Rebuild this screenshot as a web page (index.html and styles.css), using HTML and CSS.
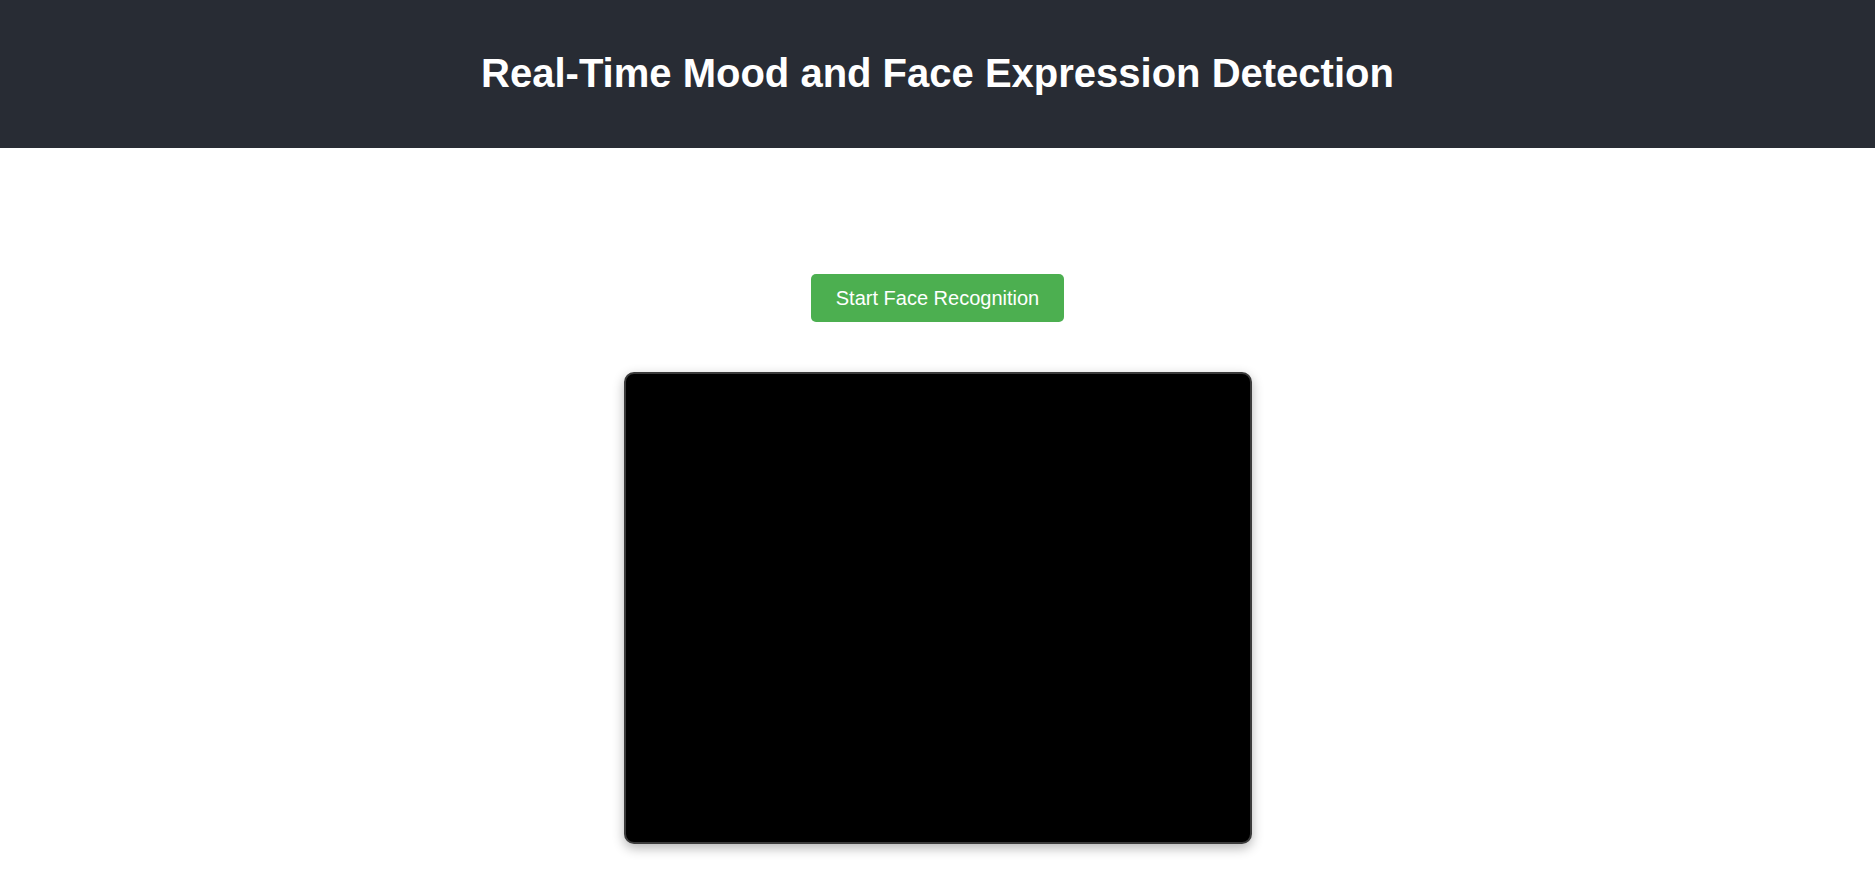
FILE: index.html
```html
<!DOCTYPE html>
<html lang="en">
<head>
<meta charset="utf-8">
<title>Real-Time Mood and Face Expression Detection</title>
<link rel="stylesheet" href="styles.css">
</head>
<body>
<header class="app-header">
  <h1 class="app-title">Real-Time Mood and Face Expression Detection</h1>
</header>
<main class="app-main">
  <button class="start-btn" type="button">Start Face Recognition</button>
  <div class="video-frame"></div>
</main>
</body>
</html>
```

FILE: styles.css
```css
html, body {
  margin: 0;
  padding: 0;
  background: #ffffff;
  font-family: "Liberation Sans", Arial, sans-serif;
}

.app-header {
  background: #282c34;
  height: 148px;
  box-sizing: border-box;
  padding-top: 50px;
  display: flex;
  justify-content: center;
}

.app-title {
  margin: 0;
  color: #ffffff;
  font-size: 40px;
  font-weight: bold;
  line-height: 46px;
}

.app-main {
  display: flex;
  flex-direction: column;
  align-items: center;
  padding-top: 126px;
  padding-bottom: 48px;
}

.start-btn {
  background: #4caf50;
  color: #ffffff;
  border: none;
  border-radius: 5px;
  font-family: "Liberation Sans", Arial, sans-serif;
  font-size: 20px;
  line-height: 24px;
  padding: 12px 0;
  width: 253px;
  height: 48px;
  white-space: nowrap;
  text-align: center;
  cursor: pointer;
}

.video-frame {
  margin-top: 50px;
  width: 628px;
  height: 472px;
  box-sizing: border-box;
  background: #000000;
  border: 2px solid #3a3a3a;
  border-radius: 10px;
  box-shadow: 0 4px 12px rgba(0, 0, 0, 0.3);
}
```
